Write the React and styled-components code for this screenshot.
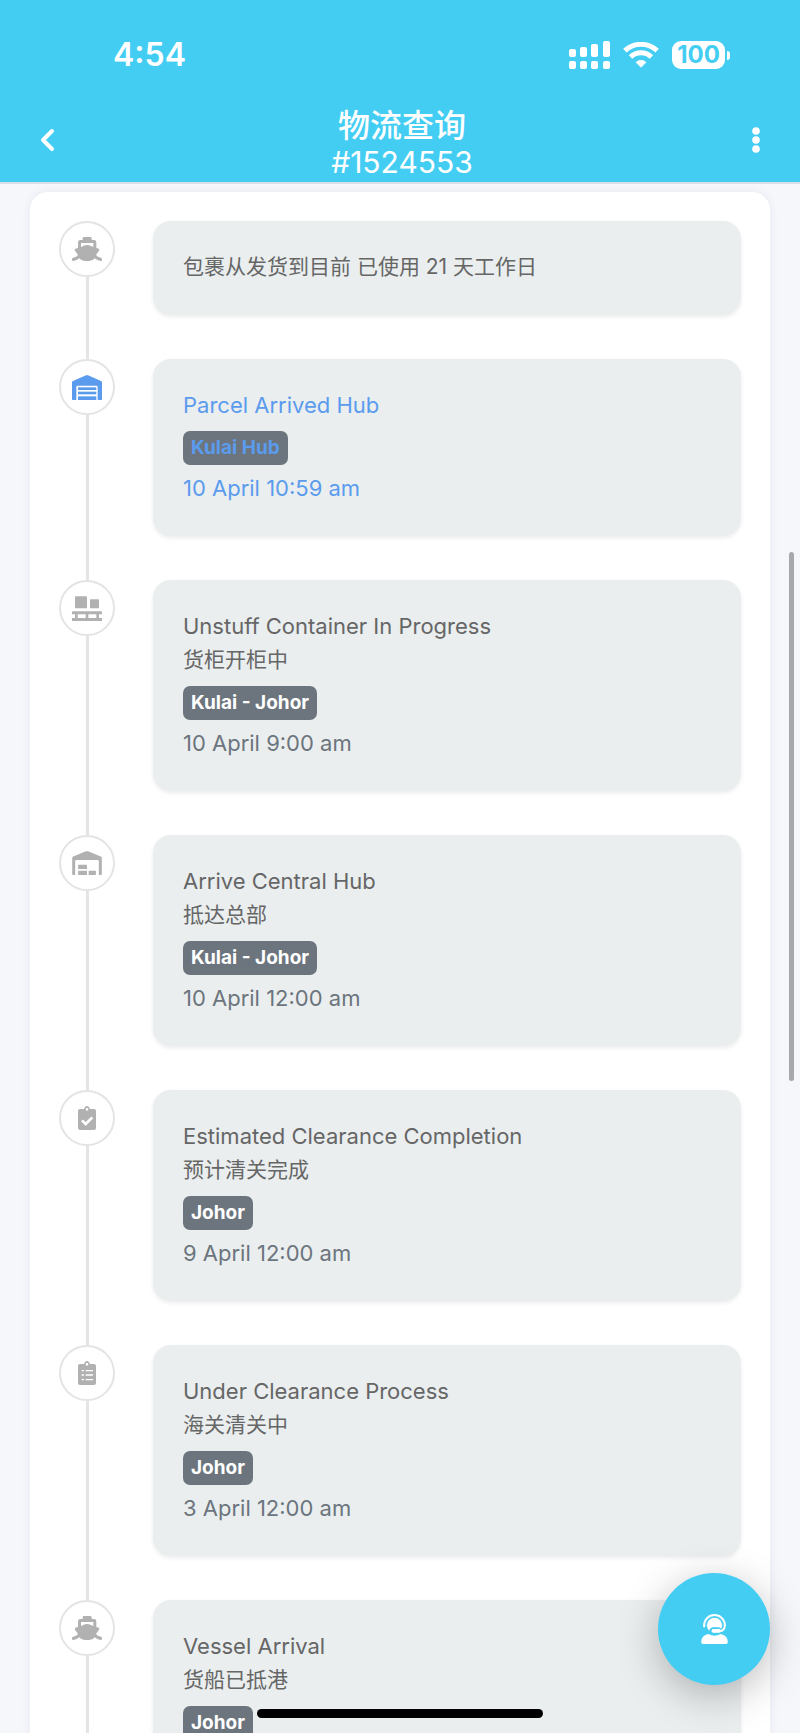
import styled, { createGlobalStyle } from "styled-components";

const GlobalStyle = createGlobalStyle`
  * {
    box-sizing: border-box;
    margin: 0;
    padding: 0;
  }

  body {
    background-color: #f5f7fb;
    font-family: Inter, "Noto Sans CJK SC", sans-serif;
    color: #666666;
  }

  button {
    border: none;
    background: none;
    color: inherit;
    font: inherit;
    cursor: pointer;
  }
`;

const Screen = styled.div`
  display: flex;
  flex-direction: column;
  height: 100vh;
  overflow: hidden;
`;

const Header = styled.header`
  flex: none;
  background-color: #44cdf3;
  border-bottom: 2px solid #d9dfe8;
  color: white;
`;

const StatusBar = styled.div`
  display: flex;
  align-items: center;
  justify-content: space-between;
  padding: 33px 70px 31px 113px;
`;

const Clock = styled.span`
  font-size: 32px;
  font-weight: 600;
  line-height: 44px;
`;

const StatusIcons = styled.div`
  display: flex;
  align-items: center;
  gap: 13px;
`;

const Battery = styled.div`
  display: flex;
  align-items: center;
  gap: 2px;
`;

const BatteryLevel = styled.span`
  width: 53px;
  border-radius: 9px;
  background-color: white;
  color: #44cdf3;
  font-size: 24px;
  font-weight: 700;
  line-height: 28px;
  text-align: center;
`;

const BatteryTip = styled.span`
  width: 3px;
  height: 9px;
  border-radius: 0px 4px 4px 0px;
  background-color: white;
`;

const NavBar = styled.nav`
  display: flex;
  align-items: flex-start;
  justify-content: space-between;
  padding: 0px 22px 2px 26px;
`;

const NavButton = styled.button`
  display: flex;
  align-items: center;
  justify-content: center;
  width: 44px;
  height: 64px;
`;

const Heading = styled.div`
  text-align: center;
`;

const Title = styled.h1`
  font-size: 32px;
  font-weight: 500;
  line-height: 36px;
`;

const Subtitle = styled.p`
  font-size: 30px;
  line-height: 36px;
`;

const Content = styled.main`
  flex: 1;
  min-height: 0;
  overflow: hidden;
  padding: 8px 30px 0px;
`;

const Timeline = styled.ol`
  list-style-type: none;
  padding: 29px 29px 0px;
  border-radius: 18px;
  background-color: white;
  box-shadow: 0px 0px 10px rgba(60, 70, 110, 0.08);
`;

const Step = styled.li`
  display: flex;
  gap: 38px;
`;

const Track = styled.div`
  flex: none;
  display: flex;
  flex-direction: column;
  align-items: center;
  width: 56px;
  color: ${({ $active }) => ($active ? "#5b9bee" : "#b1b1b1")};

  &::after {
    content: "";
    flex: 1;
    width: 3px;
    background-color: #e4e4e4;
  }
`;

const Marker = styled.div`
  display: flex;
  align-items: center;
  justify-content: center;
  width: 56px;
  height: 56px;
  border: 2px solid #e4e4e4;
  border-radius: 50%;
`;

const Card = styled.article`
  flex: 1;
  margin-bottom: 44px;
  padding: 29px 30px 31px;
  border-radius: 18px;
  background-color: #eaeeef;
  box-shadow: 0px 2px 4px rgba(0, 0, 0, 0.08);
  font-size: 22px;
  line-height: 34px;
  color: ${({ $active }) => ($active ? "#5b9bee" : "#666666")};
`;

const Chinese = styled.p`
  font-size: 21px;
`;

const Badge = styled.span`
  display: block;
  width: fit-content;
  margin: 9px 0px 6px;
  padding: 0px 8px;
  border-radius: 7px;
  background-color: #6c757d;
  color: ${({ $active }) => ($active ? "#5b9bee" : "white")};
  font-size: 19px;
  font-weight: 700;
`;

const Time = styled.time`
  display: block;
  color: ${({ $active }) => ($active ? "#5b9bee" : "#6c757d")};
`;

const ScrollThumb = styled.div`
  position: fixed;
  top: 552px;
  right: 6px;
  width: 5px;
  height: 529px;
  border-radius: 3px;
  background-color: #a6a8ab;
`;

const SupportButton = styled.button`
  position: fixed;
  right: 30px;
  bottom: 48px;
  display: flex;
  align-items: center;
  justify-content: center;
  width: 112px;
  height: 112px;
  border-radius: 50%;
  background-color: #44cdf3;
  color: white;
  box-shadow: 0px 10px 40px rgba(0, 0, 0, 0.26);
`;

const HomeIndicator = styled.div`
  position: fixed;
  bottom: 15px;
  left: 50%;
  width: 286px;
  height: 9px;
  margin-left: -143px;
  border-radius: 5px;
  background-color: black;
`;

const SignalIcon = () => (
  <svg width="41" height="28" viewBox="0 0 41 28" fill="currentColor">
    <rect x="0" y="8" width="7" height="8" rx="2" />
    <rect x="11" y="6" width="7" height="10" rx="2" />
    <rect x="22" y="3" width="7" height="13" rx="2" />
    <rect x="34" y="0" width="7" height="16" rx="2" />
    <rect x="0" y="20" width="7" height="8" rx="2" />
    <rect x="11" y="20" width="7" height="8" rx="2" />
    <rect x="22" y="20" width="7" height="8" rx="2" />
    <rect x="34" y="20" width="7" height="8" rx="2" />
  </svg>
);

const WifiIcon = () => (
  <svg width="36" height="26" viewBox="0 0 106 78" fill="none" stroke="currentColor">
    <path d="M4.6 26A71 71 0 0 1 101.4 26" strokeWidth="15" />
    <path d="M21.6 45A46 46 0 0 1 84.4 45" strokeWidth="15" />
    <path
      d="M53 76L38 61A22 22 0 0 1 68 61Z"
      fill="currentColor"
      strokeWidth="2"
      strokeLinejoin="round"
    />
  </svg>
);

const BackIcon = () => (
  <svg width="16" height="24" viewBox="0 0 16 24" fill="none" stroke="currentColor">
    <path d="M12 3L3 12L12 21" strokeWidth="4" strokeLinecap="round" strokeLinejoin="round" />
  </svg>
);

const MoreIcon = () => (
  <svg width="8" height="26" viewBox="0 0 8 26" fill="currentColor">
    <circle cx="4" cy="4" r="3.8" />
    <circle cx="4" cy="13" r="3.8" />
    <circle cx="4" cy="22" r="3.8" />
  </svg>
);

const ShipIcon = () => (
  <svg width="30" height="24" viewBox="0 0 90 72" fill="currentColor">
    <path d="M32 9V4Q32 0 36 0H55Q59 0 59 4V9H66Q73 9 73 16V33L80 35Q84 37 81 41L72 54Q76 61 87 62Q90 63 90 66V69Q90 72 86 72Q75 71 68 64Q63 72 52 72H38Q27 72 22 64Q15 71 4 72Q0 72 0 69V66Q0 63 3 62Q14 61 18 54L9 41Q7 37 10 35L18 33V16Q18 9 25 9ZM27 18V30L39 25Q45 23 51 25L64 30V18Z" />
  </svg>
);

const WarehouseIcon = () => (
  <svg width="30" height="25" viewBox="0 0 90 75" fill="currentColor">
    <path d="M3 18L42 1Q45 0 48 1L87 18Q90 19 90 22V73Q90 75 88 75H79Q77 75 77 73V36Q77 32 73 32H17Q13 32 13 36V73Q13 75 11 75H2Q0 75 0 73V22Q0 19 3 18Z" />
    <rect x="18" y="37" width="55" height="8" />
    <rect x="18" y="50" width="55" height="8" />
    <rect x="18" y="64" width="55" height="11" />
  </svg>
);

const PalletIcon = () => (
  <svg width="30" height="25" viewBox="0 0 90 75" fill="currentColor">
    <rect x="9" y="1" width="36" height="36" rx="2" />
    <rect x="54" y="10" width="27" height="27" rx="2" />
    <rect x="0" y="46" width="90" height="9" rx="1" />
    <rect x="0" y="66" width="90" height="9" rx="1" />
    <rect x="9" y="54" width="8" height="13" />
    <rect x="41" y="54" width="8" height="13" />
    <rect x="73" y="54" width="8" height="13" />
  </svg>
);

const HubIcon = () => (
  <svg width="30" height="24" viewBox="0 0 90 73" fill="currentColor">
    <path d="M3 17L42 1Q45 0 48 1L87 17Q90 18 90 21V71Q90 73 88 73H83Q81 73 81 71V31Q81 27 77 27H13Q9 27 9 31V71Q9 73 7 73H2Q0 73 0 71V21Q0 18 3 17Z" />
    <rect x="18" y="42" width="27" height="13" rx="1" />
    <rect x="18" y="60" width="27" height="13" rx="1" />
    <rect x="50" y="60" width="22" height="13" rx="1" />
  </svg>
);

const clipboardPath =
  "M6 9H18C20 3 23 0 27 0S34 3 36 9H48Q54 9 54 15V66Q54 72 48 72H6Q0 72 0 66V15Q0 9 6 9ZM27 6A4 4 0 0 0 27 14A4 4 0 0 0 27 6Z";

const ClipboardCheckIcon = () => (
  <svg width="18" height="24" viewBox="0 0 54 72" fill="currentColor">
    <path d={clipboardPath} />
    <path d="M12 43L23 54L43 34" fill="none" stroke="white" strokeWidth="8" />
  </svg>
);

const ClipboardListIcon = () => (
  <svg width="18" height="24" viewBox="0 0 54 72" fill="currentColor">
    <path d={clipboardPath} />
    <path
      d="M11 29H18M11 42H18M11 56H18M23 29H45M23 42H45M23 56H45"
      stroke="white"
      strokeWidth="4"
    />
  </svg>
);

const SupportIcon = () => (
  <svg width="27" height="30" viewBox="0 0 80 90" fill="none">
    <circle cx="40" cy="34" r="23" fill="currentColor" />
    <path
      d="M33 50Q36 46 44 48H52"
      stroke="#44cdf3"
      strokeWidth="17"
      strokeLinecap="round"
    />
    <path
      d="M9 40V34A31 31 0 0 1 71 34Q71 51 55 52"
      stroke="currentColor"
      strokeWidth="6"
    />
    <rect x="31" y="45" width="28" height="11" rx="5" fill="currentColor" />
    <path
      d="M22 60Q31 65 40 65T58 60Q80 65 80 84Q80 90 74 90H6Q0 90 0 84Q0 65 22 60Z"
      fill="currentColor"
    />
  </svg>
);

const steps = [
  { icon: ShipIcon, chinese: "包裹从发货到目前 已使用 21 天工作日" },
  {
    icon: WarehouseIcon,
    title: "Parcel Arrived Hub",
    place: "Kulai Hub",
    time: "10 April 10:59 am",
    active: true,
  },
  {
    icon: PalletIcon,
    title: "Unstuff Container In Progress",
    chinese: "货柜开柜中",
    place: "Kulai - Johor",
    time: "10 April 9:00 am",
  },
  {
    icon: HubIcon,
    title: "Arrive Central Hub",
    chinese: "抵达总部",
    place: "Kulai - Johor",
    time: "10 April 12:00 am",
  },
  {
    icon: ClipboardCheckIcon,
    title: "Estimated Clearance Completion",
    chinese: "预计清关完成",
    place: "Johor",
    time: "9 April 12:00 am",
  },
  {
    icon: ClipboardListIcon,
    title: "Under Clearance Process",
    chinese: "海关清关中",
    place: "Johor",
    time: "3 April 12:00 am",
  },
  {
    icon: ShipIcon,
    title: "Vessel Arrival",
    chinese: "货船已抵港",
    place: "Johor",
  },
];

const TimelineStep = ({ icon: Icon, title, chinese, place, time, active }) => {
  return (
    <Step>
      <Track $active={active}>
        <Marker>
          <Icon />
        </Marker>
      </Track>
      <Card $active={active}>
        {title && <p>{title}</p>}
        {chinese && <Chinese lang="zh-CN">{chinese}</Chinese>}
        {place && <Badge $active={active}>{place}</Badge>}
        {time && <Time $active={active}>{time}</Time>}
      </Card>
    </Step>
  );
};

const App = () => {
  return (
    <Screen>
      <GlobalStyle />
      <Header>
        <StatusBar>
          <Clock>4:54</Clock>
          <StatusIcons>
            <SignalIcon />
            <WifiIcon />
            <Battery>
              <BatteryLevel>100</BatteryLevel>
              <BatteryTip />
            </Battery>
          </StatusIcons>
        </StatusBar>
        <NavBar>
          <NavButton aria-label="Back">
            <BackIcon />
          </NavButton>
          <Heading>
            <Title lang="zh-CN">物流查询</Title>
            <Subtitle>#1524553</Subtitle>
          </Heading>
          <NavButton aria-label="More">
            <MoreIcon />
          </NavButton>
        </NavBar>
      </Header>
      <Content>
        <Timeline>
          {steps.map((step, index) => (
            <TimelineStep key={index} {...step} />
          ))}
        </Timeline>
      </Content>
      <ScrollThumb />
      <SupportButton aria-label="Customer support">
        <SupportIcon />
      </SupportButton>
      <HomeIndicator />
    </Screen>
  );
};

export default App;
